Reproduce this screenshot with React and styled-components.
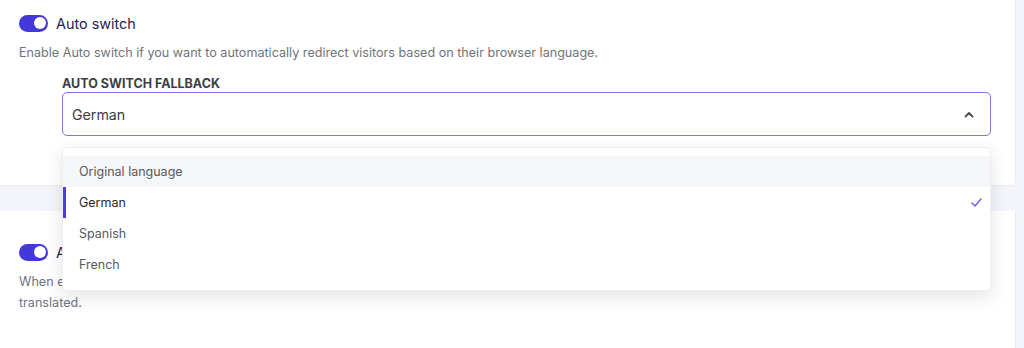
import React from "react";
import styled, { createGlobalStyle } from "styled-components";

const Global = createGlobalStyle`
  body {
    margin: 0;
    background: #f4f5fa;
    font-family: Inter, "Noto Sans", sans-serif;
  }
`;

const Page = styled.div`
  display: flex;
  flex-direction: column;
  gap: 25px;
  width: 1016px;
  height: 348px;
  overflow: hidden;
`;

const Card = styled.section`
  flex-shrink: 0;
  background: #ffffff;
  border: 1px solid #ebedf3;
  border-top: none;
  border-left: none;
  border-radius: 0 0 5px 0;
  padding: ${(p) => p.$pad};
  height: ${(p) => p.$height};
  box-sizing: border-box;
  position: relative;
`;

const Row = styled.div`
  display: flex;
  align-items: center;
  gap: 8px;
  height: 20px;
`;

const Toggle = styled.span`
  width: 29px;
  height: 17px;
  border-radius: 9px;
  background: #4338d9;
  display: flex;
  align-items: center;
  justify-content: flex-end;
  padding: 0 2px;
  box-sizing: border-box;
  &::after {
    content: "";
    width: 12px;
    height: 12px;
    border-radius: 50%;
    background: #fff;
  }
`;

const Title = styled.span`
  font-size: 14.4px;
  color: #25224f;
`;

const Desc = styled.p`
  margin: ${(p) => p.$mt} 0 0;
  font-size: 12.6px;
  line-height: 21px;
  color: #70737b;
  max-width: 985px;
`;

const Field = styled.div`
  margin: 13px 0 0 43px;
  width: 929px;
  position: relative;
`;

const Label = styled.div`
  font-size: 12.5px;
  font-weight: 700;
  color: #3d3f45;
  line-height: 16px;
`;

const Select = styled.div`
  height: 44px;
  border: 1px solid #7c78e4;
  border-radius: 5px;
  box-sizing: border-box;
  display: flex;
  align-items: center;
  justify-content: space-between;
  padding: 0 16px 0 9px;
  font-size: 14.2px;
  color: #3a3d44;
`;

const Menu = styled.ul`
  position: absolute;
  top: 71px;
  left: 0;
  right: 0;
  margin: 0;
  padding: 8px 0 10px;
  list-style: none;
  background: #fff;
  border: 1px solid #eceef2;
  border-radius: 4px;
  box-shadow: 0 6px 18px rgba(30, 35, 60, 0.12);
  z-index: 5;
`;

const Item = styled.li`
  height: 31px;
  display: flex;
  align-items: center;
  justify-content: space-between;
  padding: 0 8px 0 16px;
  font-size: 12.5px;
  color: ${(p) => (p.$selected ? "#26282e" : "#55585f")};
  background: ${(p) => (p.$hover ? "#f6f7f9" : "#fff")};
  box-shadow: ${(p) => (p.$selected ? "inset 3px 0 0 #4a40df" : "none")};
`;

const Chevron = () => (
  <svg width="10" height="7" viewBox="0 0 10 7" fill="none">
    <path d="M1.5 5.5 5 2l3.5 3.5" stroke="#4a4d54" strokeWidth="1.8" strokeLinecap="round" strokeLinejoin="round" />
  </svg>
);

const Check = () => (
  <svg width="11" height="9" viewBox="0 0 11 9" fill="none">
    <path d="M1 5l3 3 6-7" stroke="#6b62ea" strokeWidth="1.5" strokeLinecap="round" strokeLinejoin="round" />
  </svg>
);

const options = ["Original language", "German", "Spanish", "French"];

export default function App() {
  return (
    <>
      <Global />
      <Page>
        <Card $pad="13px 19px" $height="186px">
          <Row>
            <Toggle />
            <Title>Auto switch</Title>
          </Row>
          <Desc $mt="9px">
            Enable Auto switch if you want to automatically redirect visitors based on their browser language.
          </Desc>
          <Field>
            <Label>AUTO SWITCH FALLBACK</Label>
            <Select>
              German
              <Chevron />
            </Select>
            <Menu>
              {options.map((o) => (
                <Item key={o} $hover={o === "Original language"} $selected={o === "German"}>
                  {o}
                  {o === "German" && <Check />}
                </Item>
              ))}
            </Menu>
          </Field>
        </Card>
        <Card $pad="31px 19px" $height="200px">
          <Row>
            <Toggle />
            <Title>Automatic translation</Title>
          </Row>
          <Desc $mt="9px">
            When enabled, any new content published on your website is detected and sent for translation right away, so visitors see pages that are
            <br />
            translated.
          </Desc>
        </Card>
      </Page>
    </>
  );
}
